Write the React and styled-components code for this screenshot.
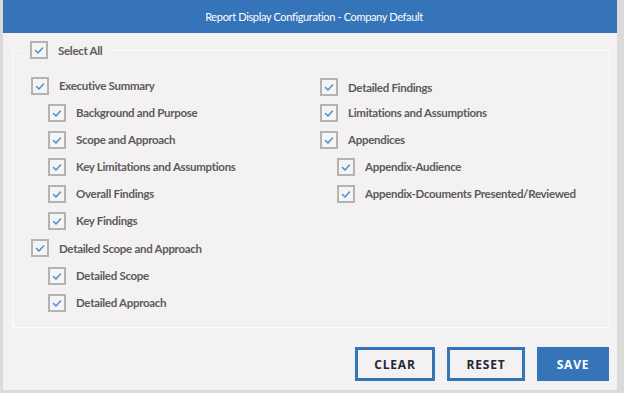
import React from "react";
import styled, { createGlobalStyle } from "styled-components";

const Global = createGlobalStyle`
  html, body {
    margin: 0;
    padding: 0;
    background: #dadada;
  }
  * { box-sizing: border-box; }
`;

const Page = styled.div`
  width: 624px;
  height: 393px;
  padding-left: 3px;
  background: #dadada;
`;

const Dialog = styled.div`
  width: 614px;
  height: 390px;
  background: #f3f1f2;
  display: flex;
  flex-direction: column;
  font-family: Lato, "Open Sans", sans-serif;
`;

const Header = styled.div`
  height: 33px;
  background: #3574b8;
  color: #fff;
  font-size: 11px;
  letter-spacing: -0.35px;
  display: flex;
  align-items: center;
  justify-content: center;
  padding-left: 8px;
`;

const Fieldset = styled.fieldset`
  margin: 8px 7px 0 9px;
  padding: 13px 0 11px 0;
  border: 1px solid #fdfdfd;
  min-width: 0;
`;

const Legend = styled.legend`
  margin-left: 8px;
  padding: 0 9px;
`;

const Columns = styled.div`
  display: grid;
  grid-template-columns: 289px 1fr;
  padding-left: 18px;
`;

const Column = styled.div`
  display: flex;
  flex-direction: column;
  padding-top: ${(p) => p.$offset || 0}px;
`;

const Row = styled.label`
  display: flex;
  align-items: center;
  gap: 10px;
  height: ${(p) => p.$h || 27}px;
  padding-left: ${(p) => (p.$sub ? 17 : 0)}px;
  font-size: 11.5px;
  font-weight: 700;
  color: #5b5b5b;
  letter-spacing: -0.3px;
  white-space: nowrap;
`;

const Box = styled.span`
  width: 18px;
  height: 18px;
  flex: none;
  border: 2px solid #b3b3b3;
  background: #f5f4f5;
  display: flex;
`;

const Footer = styled.div`
  display: flex;
  justify-content: flex-end;
  gap: 12px;
  padding: 19px 8px 0 0;
`;

const Button = styled.button`
  width: ${(p) => p.$w}px;
  height: 34px;
  border: 3px solid #3574b8;
  background: ${(p) => (p.$primary ? "#3574b8" : "#f3f1f2")};
  color: ${(p) => (p.$primary ? "#fff" : "#262735")};
  font-family: "Open Sans", sans-serif;
  font-weight: 700;
  font-size: 12px;
  letter-spacing: 0.8px;
  cursor: pointer;
`;

function Check({ label, sub, h }) {
  return (
    <Row $sub={sub} $h={h}>
      <Box>
        <svg width="14" height="14" viewBox="0 0 14 14">
          <polyline points="3.5,7.5 6,10 10.5,5" fill="none" stroke="#4a8fd6" strokeWidth="1.5" strokeLinecap="round" strokeLinejoin="round" />
        </svg>
      </Box>
      {label}
    </Row>
  );
}

export default function App() {
  return (
    <Page>
      <Global />
      <Dialog>
        <Header>Report Display Configuration - Company Default</Header>
        <Fieldset>
          <Legend>
            <Check label="Select All" h={18} />
          </Legend>
          <Columns>
            <Column>
              <Check label="Executive Summary" />
              <Check sub label="Background and Purpose" />
              <Check sub label="Scope and Approach" />
              <Check sub label="Key Limitations and Assumptions" />
              <Check sub label="Overall Findings" />
              <Check sub label="Key Findings" />
              <Check label="Detailed Scope and Approach" h={28} />
              <Check sub label="Detailed Scope" />
              <Check sub label="Detailed Approach" />
            </Column>
            <Column $offset={3}>
              <Check label="Detailed Findings" h={24} />
              <Check label="Limitations and Assumptions" />
              <Check label="Appendices" />
              <Check sub label="Appendix-Audience" />
              <Check sub label="Appendix-Dcouments Presented/Reviewed" />
            </Column>
          </Columns>
        </Fieldset>
        <Footer>
          <Button $w={80}>CLEAR</Button>
          <Button $w={78}>RESET</Button>
          <Button $w={72} $primary>SAVE</Button>
        </Footer>
      </Dialog>
    </Page>
  );
}
